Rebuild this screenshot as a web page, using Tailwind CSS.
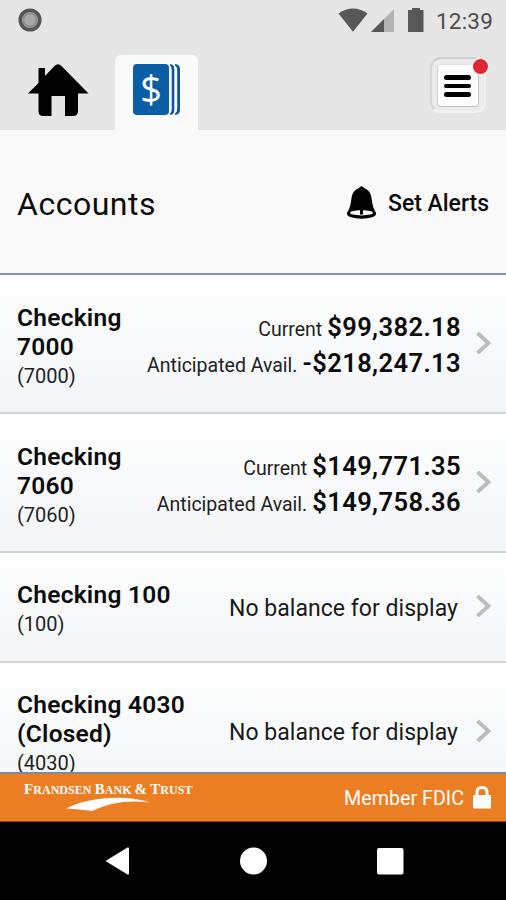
<!DOCTYPE html>
<html lang="en">
<head>
<meta charset="utf-8">
<meta name="viewport" content="width=device-width, initial-scale=1">
<title>Accounts</title>
<script src="https://cdn.jsdelivr.net/npm/@tailwindcss/browser@4"></script>
</head>
<body class="w-[506px] h-[900px] overflow-hidden flex flex-col bg-[#f9f9f9] text-[#0c0c0c] font-['Roboto',sans-serif]">
  <!-- Status bar -->
  <div class="h-[55px] shrink-0 bg-[#e6e6e6] flex justify-between pl-[18px] pr-[13px] pt-[8px]">
    <svg class="w-6 h-6" viewBox="0 0 24 24"><circle cx="12" cy="12" r="9.800" fill="#a0a0a0" stroke="#555" stroke-width="3.600"/><circle cx="12" cy="12" r="6.500" fill="#a8a8a8" stroke="#8b8b8b" stroke-width="1.500"/></svg>
    <div class="flex">
      <svg class="w-[98px] h-[26px]" viewBox="338 8 98 26" fill="#585858"><path d="M338.500 13.500Q353 3.500 367.500 13.500L353 31.800Z"/><path d="M394 9V32H371Z" fill="#b3b3b3"/><path d="M384 19V32H371Z"/><path d="M412 8h8v2h3.500v22h-15.500v-22h4z"/></svg>
      <span class="text-[22.5px] leading-[26px] text-[#4d4d4d] tracking-[0.2px]">12:39</span>
    </div>
  </div>
  <!-- Tabs -->
  <nav class="h-[75px] shrink-0 bg-[#e6e6e6] flex">
    <div class="w-[115px] pl-[28px] pt-[8px]">
      <svg class="w-[61px] h-[54px]" viewBox="28 63 61 54"><path d="M28 93.500L38.500 83V68H45V76L54.500 66Q58 62.500 61.500 66L88.500 93.500H78V111Q78 116 73 116H65V96H51.500V116H43Q38.500 116 38.500 111V93.500Z"/></svg>
    </div>
    <div class="w-[83px] bg-[#fafafa] rounded-t-[6px] pl-[18px] pt-[9px]">
      <div class="flex">
        <div class="w-[36px] h-[51px] rounded-[4px] bg-[#0a5ea6] text-white flex items-center justify-center"><span class="text-[38px] leading-[51px] -mt-[3px] font-['Open_Sans',sans-serif]">$</span></div>
        <svg class="w-[12px] h-[51px]" viewBox="0 0 12 51" fill="#1256a2"><path d="M1 0Q5.300 .5 5.300 5V46Q5.300 50.500 1 51V49.500Q2.700 48.500 2.700 45V6Q2.700 2.500 1 1.500Z"/><path d="M6 0Q11 .5 11 5V46Q11 50.500 6 51V49.500Q8.200 48.500 8.200 45V6Q8.200 2.500 6 1.500Z"/></svg>
      </div>
    </div>
    <div class="grow flex justify-end pr-[20px] pt-[2px]">
      <div class="relative w-[56px] h-[56px] rounded-[11px] border-2 border-t-[#cfcfcf] border-l-[#d6d6d6] border-r-[#f0f0f0] border-b-[#f4f4f4] bg-[#ebebeb] p-[5px]">
        <div class="w-[42px] h-[43px] rounded-[4px] bg-[#fdfdfd] border border-t-[#e4e4e4] border-l-[#d0d0d0] border-r-[#c4c4c4] border-b-[#bcbcbc] flex flex-col items-center justify-center gap-[4px] pt-[1px] pr-[1px]">
          <div class="w-[27px] h-[4.700px] rounded-full bg-black"></div>
          <div class="w-[27px] h-[4.700px] rounded-full bg-black"></div>
          <div class="w-[27px] h-[4.700px] rounded-full bg-black"></div>
        </div>
        <div class="absolute -top-[2px] -right-[6px] w-[19px] h-[19px] rounded-full bg-[#e32636] border-2 border-[#f5eeee]"></div>
      </div>
    </div>
  </nav>
  <!-- Heading -->
  <header class="h-[145px] shrink-0 flex items-center justify-between pl-[17px] pr-[17px] border-b-2 border-[#8492b5]">
    <h1 class="text-[32px] leading-[40px] pt-[5px] tracking-[0.5px]">Accounts</h1>
    <div class="flex items-center gap-[11px] pt-[2px]">
      <svg class="w-[31px] h-[34px]" viewBox="347 186 31 34"><path d="M360 188Q362.500 184.500 365 188Q371.500 190.500 372.500 198Q373.500 207 376 211Q379 215 374 217Q363 220.500 351 217Q346 215 349 211Q351.500 207 352.500 198Q353.500 190.500 360 188Z"/><path d="M352 211.500Q362.500 208.500 373 211.500Q375 213.500 372.500 214.300Q362.500 216.500 352.500 214.300Q350 213.500 352 211.500Z" fill="#f5f5f5"/><path d="M361 209h3v5.500h-3z"/></svg>
      <span class="text-[23px] leading-[30px] tracking-[-0.03px] font-medium pt-[3px]">Set Alerts</span>
    </div>
  </header>
  <!-- Account rows -->
  <main class="h-[497px] shrink-0 overflow-hidden">
    <section class="h-[139px] flex items-center border-b-2 border-[#d3d5d7] bg-linear-to-b from-[#fefefe] to-[#f3f5f7] pl-[17px] pr-[15px]">
      <div class="w-[120px] pt-[7px]"><h2 class="text-[24.5px] leading-[29px] font-semibold tracking-[0.25px]">Checking 7000</h2><p class="text-[20px] leading-[30px] text-[#222]">(7000)</p></div>
      <div class="grow whitespace-nowrap pr-[15px] pt-[2px]"><p class="h-[36px] flex items-baseline justify-end gap-[5px] leading-[36px]"><span class="text-[19.5px] text-[#222]">Current</span><b class="text-[25.5px] font-semibold tracking-[0.4px]">$99,382.18</b></p><p class="h-[36px] flex items-baseline justify-end gap-[5px] leading-[36px]"><span class="text-[19.5px] text-[#222]">Anticipated Avail.</span><b class="text-[25.5px] font-semibold tracking-[0.4px]">-$218,247.13</b></p></div>
      <svg class="w-[15px] h-[24px] mb-[2px]" viewBox="0 0 15 24"><path d="M1.500 2L12.500 12L1.500 22" fill="none" stroke="#bdbdbd" stroke-width="3.800"/></svg>
    </section>
    <section class="h-[139px] flex items-center border-b-2 border-[#d3d5d7] bg-linear-to-b from-[#fefefe] to-[#f3f5f7] pl-[17px] pr-[15px]">
      <div class="w-[120px] pt-[7px]"><h2 class="text-[24.5px] leading-[29px] font-semibold tracking-[0.25px]">Checking 7060</h2><p class="text-[20px] leading-[30px] text-[#222]">(7060)</p></div>
      <div class="grow whitespace-nowrap pr-[15px] pt-[2px]"><p class="h-[36px] flex items-baseline justify-end gap-[5px] leading-[36px]"><span class="text-[19.5px] text-[#222]">Current</span><b class="text-[25.5px] font-semibold tracking-[0.4px]">$149,771.35</b></p><p class="h-[36px] flex items-baseline justify-end gap-[5px] leading-[36px]"><span class="text-[19.5px] text-[#222]">Anticipated Avail.</span><b class="text-[25.5px] font-semibold tracking-[0.4px]">$149,758.36</b></p></div>
      <svg class="w-[15px] h-[24px] mb-[2px]" viewBox="0 0 15 24"><path d="M1.500 2L12.500 12L1.500 22" fill="none" stroke="#bdbdbd" stroke-width="3.800"/></svg>
    </section>
    <section class="h-[110px] flex items-center border-b-2 border-[#d3d5d7] bg-linear-to-b from-[#fefefe] to-[#f3f5f7] pl-[17px] pr-[15px]">
      <div class="w-[180px] pt-[5px]"><h2 class="text-[24.5px] leading-[29px] font-semibold tracking-[0.25px]">Checking 100</h2><p class="text-[20px] leading-[30px] text-[#222]">(100)</p></div>
      <p class="grow text-right whitespace-nowrap text-[23px] leading-[30px] pr-[18px] pt-[4px] tracking-[0.04px] text-[#1a1a1a]">No balance for display</p>
      <svg class="w-[15px] h-[24px] mb-[2px]" viewBox="0 0 15 24"><path d="M1.500 2L12.500 12L1.500 22" fill="none" stroke="#bdbdbd" stroke-width="3.800"/></svg>
    </section>
    <section class="h-[139px] flex items-center border-b-2 border-[#d3d5d7] bg-linear-to-b from-[#fefefe] to-[#f3f5f7] pl-[17px] pr-[15px]">
      <div class="w-[180px] pt-[5px]"><h2 class="text-[24.5px] leading-[29px] font-semibold tracking-[0.25px]">Checking 4030 (Closed)</h2><p class="text-[20px] leading-[30px] text-[#222]">(4030)</p></div>
      <p class="grow text-right whitespace-nowrap text-[23px] leading-[30px] pr-[18px] pt-[3px] tracking-[0.04px] text-[#1a1a1a]">No balance for display</p>
      <svg class="w-[15px] h-[24px] mb-[2px]" viewBox="0 0 15 24"><path d="M1.500 2L12.500 12L1.500 22" fill="none" stroke="#bdbdbd" stroke-width="3.800"/></svg>
    </section>
  </main>
  <!-- Brand footer -->
  <footer class="h-[50px] shrink-0 bg-[#eb7e23] border-t-2 border-t-[#7b8d9c] border-b border-b-[#8a4a15] text-white flex items-center justify-between pl-[24px] pr-[15px]">
    <div class="flex flex-col h-full pt-[8px]">
      <div class="font-['Liberation_Serif',serif] font-bold text-[12px] leading-[14px] whitespace-nowrap tracking-[0.05px]"><span class="text-[15px]">F</span>RANDSEN <span class="text-[15px]">B</span>ANK <span class="text-[15px]">&amp;</span> <span class="text-[15px]">T</span>RUST</div>
      <svg class="w-[84px] h-[14px] ml-[42px]" viewBox="66 798 84 14" fill="#fff"><path d="M66 809.500Q78 803 98 800Q130 796.500 150 803.500Q118 799.500 92 812Q80 810 66 809.500Z"/></svg>
    </div>
    <div class="flex items-center gap-[9px]">
      <span class="text-[19.7px] leading-[26px] pt-[3px]">Member FDIC</span>
      <svg class="w-[18px] h-[24px] mb-[2px]" viewBox="0 0 18 24"><path d="M4 12V7Q4 2.500 9 2.500T14 7V12" fill="none" stroke="#fff" stroke-width="3"/><rect y="10" width="18" height="13.500" rx="1" fill="#fff"/></svg>
    </div>
  </footer>
  <!-- System navigation -->
  <div class="grow bg-black">
    <svg class="w-[506px] h-[78px]" viewBox="0 822 506 78" fill="#fff"><path d="M105.500 861L127.500 847.500Q129 847 129 848.500V873.500Q129 875 127.500 874.500Z"/><circle cx="253.500" cy="861" r="13.500"/><rect x="377" y="848" width="26.500" height="26.500" rx="2"/></svg>
  </div>
</body>
</html>
